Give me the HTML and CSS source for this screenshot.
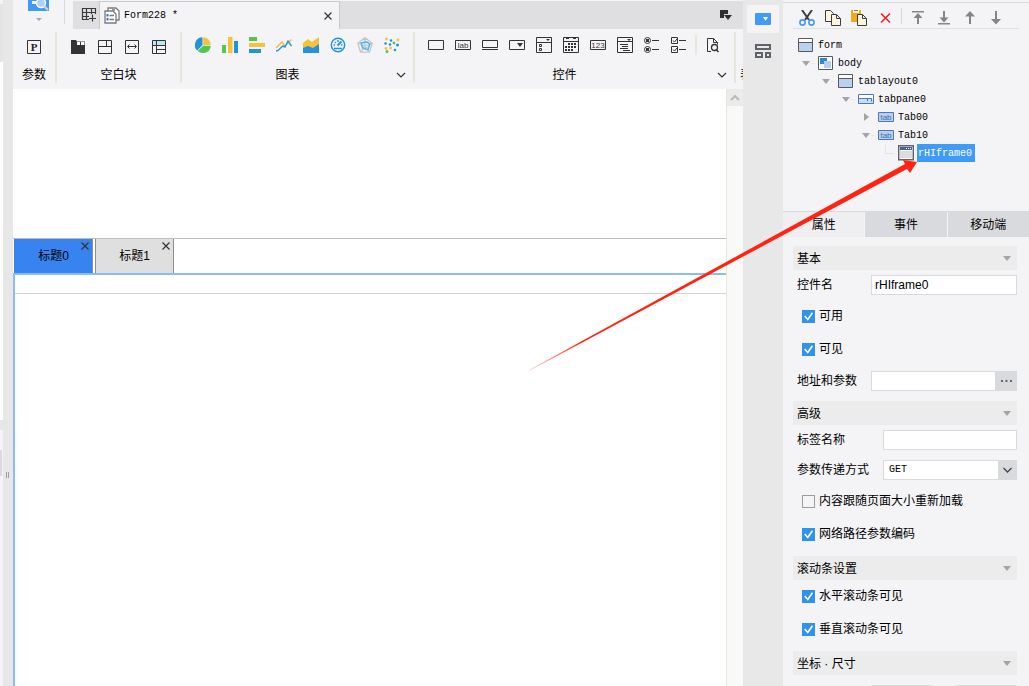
FILE: index.html
```html
<!DOCTYPE html>
<html lang="zh-CN">
<head>
<meta charset="utf-8">
<title>Form228</title>
<link rel="stylesheet" href="styles.css">
</head>
<body>
<div class="app">
  <aside class="edge">
    <div class="edge-card"></div>
    <div class="edge-list"></div>
    <div class="edge-gap"></div>
    <div class="edge-foot"><div class="edge-bar"></div></div>
  </aside>
  <div class="splitter"><span class="grip"></span></div>

  <main class="main">
    <header class="topbar">
      <div class="preview">
        <button class="btn" aria-label="预览">
          <svg width="22" height="22" viewBox="0 0 22 22"><path fill="#409bf8" d="M0 0h21v11H0z"/><path fill="#fff" d="M4 1h6v3H4z"/><circle cx="13" cy="3" r="4.5" fill="#a9d2fa" stroke="#fff" stroke-width="1.4"/><path d="M16 6l4 4" stroke="#d8d2c6" stroke-width="2.2"/><path fill="#a8a8a8" d="M8 18h6l-3 3z"/></svg>
        </button>
      </div>
      <div class="tabstrip">
        <button class="btn new-tab" aria-label="新建">
          <svg width="16" height="16" viewBox="0 0 16 16" fill="none" stroke="#3a3a3e" stroke-width="1.2"><path d="M14.500 7V1.500H1.500v11H8M1.500 5.500h13M1.500 9.500H8M5.500 1.500v11M10.500 1.500V7M11.500 7.500v7M8 11.500h7"/></svg>
        </button>
        <div class="file-tab">
          <svg width="16" height="17" viewBox="0 0 16 17" fill="none" stroke="#77797c" stroke-width="1.3"><path fill="#fff" d="M4 4V1h8l3 3v9h-3"/><path fill="#fff" d="M1 4h8l3 3v9H1z"/><path d="M5.500 8.500h4.500M5.500 12.500h4.500M8 3h3"/><path stroke="none" fill="#2874c4" d="M2.500 7h2v2.500h-2zM2.500 11h2v2.500h-2z"/></svg>
          <span class="file-name">Form228 *</span>
          <button class="btn" aria-label="关闭">
            <svg width="8" height="8" viewBox="0 0 8 8" stroke="#333" stroke-width="1.2"><path d="M.5.500l7 7M7.500.500l-7 7"/></svg>
          </button>
        </div>
        <button class="btn tab-menu" aria-label="窗口列表">
          <svg width="12" height="11" viewBox="0 0 12 11" fill="#2e2e30"><path d="M0 0h8v4H4v4H0zM4 5h8L8 10z"/></svg>
        </button>
      </div>
    </header>

    <nav class="toolbar">
      <section class="group">
        <div class="icons">
          <button class="btn" aria-label="参数"><svg width="16" height="18" viewBox="0 0 16 18"><path fill="none" stroke="#333" d="M1.500 3.500h13v13h-13z"/><text x="8" y="14" text-anchor="middle" class="glyph-p">P</text></svg></button>
        </div>
        <div class="label-row"><span class="label">参数</span></div>
      </section>
      <section class="group">
        <div class="icons">
          <button class="btn" aria-label="报表块"><svg width="16" height="18" viewBox="0 0 16 18"><path fill="#333" d="M1 3h5l1 1.500h8V17H1z"/><path fill="#fff" d="M7 5h3v3H7zM11 5h3.500v3H11z"/></svg></button>
          <button class="btn" aria-label="绝对画布块"><svg width="16" height="18" viewBox="0 0 16 18" fill="none" stroke="#333"><path d="M1.500 3.500h13v13h-13zM1.500 9.500h13M9.500 3.500v6"/></svg></button>
          <button class="btn" aria-label="自适应块"><svg width="16" height="18" viewBox="0 0 16 18" fill="none" stroke="#333"><path d="M1.500 3.500h13v13h-13zM4 9.500h8M5.500 7.500l-2 2 2 2M10.500 7.500l2 2-2 2"/></svg></button>
          <button class="btn" aria-label="Tab块"><svg width="16" height="18" viewBox="0 0 16 18" fill="none" stroke="#333"><path fill="#bfe6fb" stroke="none" d="M2 4h12v4H2z"/><path d="M1.500 3.500h13v13h-13zM1.500 8.500h13M5.500 3.500v13M5.500 12.500h9"/></svg></button>
        </div>
        <div class="label-row"><span class="label">空白块</span></div>
      </section>
      <section class="group">
        <div class="icons">
          <button class="btn" aria-label="饼图"><svg width="16" height="18" viewBox="0 0 16 18"><path fill="#2193dc" d="M7.500 8V.3A7.700 7.700 0 0 0 2.300 13.600z"/><path fill="#f8c137" d="M8.200 8V.3A7.700 7.700 0 0 1 15.700 8z"/><path fill="#4fc84c" d="M8 8.700h7.700A7.700 7.700 0 0 1 2.800 14z"/></svg></button>
          <button class="btn" aria-label="柱形图"><svg width="16" height="18" viewBox="0 0 16 18"><path fill="#52c750" d="M0 8h4v8H0z"/><path fill="#f8c137" d="M6 0h4.500v16H6z"/><path fill="#2193dc" d="M12 4h4v12h-4z"/></svg></button>
          <button class="btn" aria-label="条形图"><svg width="16" height="18" viewBox="0 0 16 18"><path fill="#52c750" d="M0 0h8v4H0z"/><path fill="#f8c137" d="M0 6h16v4H0z"/><path fill="#2193dc" d="M0 12h12v4H0z"/></svg></button>
          <button class="btn" aria-label="折线图"><svg width="16" height="18" viewBox="0 0 16 18" fill="none" stroke-width="1.400"><path stroke="#f8b837" d="M0 11l6-6 3 4 6.500-6.500"/><path stroke="#2193dc" d="M0 14c4 0 4-4 7-5l2 1 3-6 3.500 5"/></svg></button>
          <button class="btn" aria-label="面积图"><svg width="16" height="18" viewBox="0 0 16 18"><path fill="#2193dc" d="M0 9l5-2 4 3 7-5v11H0z"/><path fill="#f8c137" d="M0 6l5-4 4 3 7-5v7l-6 4-5-2-5 2z"/></svg></button>
          <button class="btn" aria-label="仪表盘"><svg width="16" height="18" viewBox="0 0 16 18" fill="none" stroke="#2193dc" stroke-width="1.400"><circle cx="8" cy="8" r="6.700"/><path d="M4 11.500h8M3.500 8h1.500M11 8h1.500M8 3v2M5 5l1 1"/><path d="M7.500 8.500l4-4" stroke-width="2"/></svg></button>
          <button class="btn" aria-label="雷达图"><svg width="16" height="18" viewBox="0 0 16 18" fill="none"><path stroke="#c3c5c8" stroke-width="1.300" d="M8 .7l7.200 5.500-2.700 9h-9L.8 6.200zM8 4l4 3-1.500 5h-5L4 7zM8 1v8L1 6M8 9l7-3M8 9l4 6M8 9l-4 6"/><path stroke="#4bb8f0" stroke-width="1.300" d="M4 6l6-1 3 2-2 6-5-2z"/></svg></button>
          <button class="btn" aria-label="散点图"><svg width="16" height="18" viewBox="0 0 16 18"><g fill="#2193dc"><circle cx="7" cy="3.500" r="1.300"/><circle cx="1.500" cy="6.500" r="1.300"/><circle cx="6" cy="7.500" r="1.300"/><circle cx="13.500" cy="8" r="1.500"/><circle cx="11" cy="13" r="1.300"/></g><g fill="#f5be45"><circle cx="2.500" cy="2" r="1.400"/><circle cx="14" cy="3" r="1.400"/><circle cx="2" cy="11.500" r="1.400"/><circle cx="6.500" cy="11" r="1.400"/></g><g fill="#52c750"><circle cx="10" cy="6" r="1.400"/><circle cx="3" cy="14.500" r="1.500"/></g></svg></button>
        </div>
        <div class="label-row"><span class="label">图表</span><button class="btn more" aria-label="更多图表"><svg width="16" height="8" viewBox="0 0 16 8" fill="none" stroke="#333" stroke-width="1.200"><path d="M4 2l4 4 4-4"/></svg></button></div>
      </section>
      <section class="group">
        <div class="icons">
          <button class="btn" aria-label="文本控件"><svg width="16" height="18" viewBox="0 0 16 18" fill="none" stroke="#333"><path d="M.5 3.500h15v9H.5z"/></svg></button>
          <button class="btn" aria-label="标签控件"><svg width="16" height="18" viewBox="0 0 16 18"><path fill="none" stroke="#333" d="M.5 3.500h15v9H.5z"/><text x="8" y="11" text-anchor="middle" class="glyph-s">lab</text></svg></button>
          <button class="btn" aria-label="按钮控件"><svg width="16" height="18" viewBox="0 0 16 18" fill="none" stroke="#333"><path d="M.5 3.500h15v7H.5zM0 12.500h16"/></svg></button>
          <button class="btn" aria-label="下拉框控件"><svg width="16" height="18" viewBox="0 0 16 18"><path fill="none" stroke="#333" d="M.5 3.500h15v9H.5z"/><path fill="#333" d="M8 6h6l-3 4z"/></svg></button>
          <button class="btn" aria-label="下拉复选框控件"><svg width="16" height="18" viewBox="0 0 16 18" fill="none" stroke="#333"><path d="M.5.500h15v15H.5zM.5 5.500h15M3.500 7.500h2v2h-2zM3.500 11.500h2v2h-2z"/><path stroke="none" fill="#333" d="M10 2h4l-2 2z"/></svg></button>
          <button class="btn" aria-label="日期控件"><svg width="16" height="18" viewBox="0 0 16 18" fill="none" stroke="#333"><path d="M.5.500h15v15H.5zM.5 4.500h15"/><path d="M3 1.500h3M10 1.500h3"/><path stroke-width="2" stroke-dasharray="2 1" d="M5 7h8M2 10h11M2 13h8"/></svg></button>
          <button class="btn" aria-label="数字控件"><svg width="16" height="18" viewBox="0 0 16 18"><path fill="none" stroke="#333" d="M.5 3.500h15v9H.5z"/><text x="8" y="11" text-anchor="middle" class="glyph-s">123</text></svg></button>
          <button class="btn" aria-label="下拉树控件"><svg width="16" height="18" viewBox="0 0 16 18" fill="none" stroke="#333"><path d="M.5.500h15v15H.5zM.5 4.500h15M3 7.500h8M5 9.500h6M3 11.500h8M6 13.500h7"/><path stroke="none" fill="#333" d="M10 2h4l-2 2z"/></svg></button>
          <button class="btn" aria-label="单选按钮组"><svg width="16" height="18" viewBox="0 0 16 18" fill="none" stroke="#333"><circle cx="3.500" cy="3.500" r="3"/><circle cx="3.500" cy="12.500" r="3"/><path d="M8 3.500h7M8 12.500h7"/><path stroke-width="3" d="M2 3.500h3M2 12.500h3"/></svg></button>
          <button class="btn" aria-label="复选按钮组"><svg width="16" height="18" viewBox="0 0 16 18" fill="none" stroke="#333"><path d="M.5.500h6v6h-6zM.5 9.500h6v6h-6zM2 3.500l1.500 1.500L6 2M2 12.500L3.500 14 6 11M8 3.500h7M8 12.500h7"/></svg></button>
          <span class="icon-sep"></span>
          <button class="btn" aria-label="查询"><svg width="16" height="18" viewBox="0 0 16 18" fill="none" stroke="#333"><path d="M6 14.500H2.500v-13h6l4 4v2M8.500 1.500v4h4"/><circle cx="9.500" cy="10.500" r="3" stroke-width="1.300"/><path stroke-width="1.500" d="M11 12.500l2.500 2.500"/></svg></button>
        </div>
        <div class="label-row"><span class="label">控件</span><button class="btn more" aria-label="更多控件"><svg width="16" height="8" viewBox="0 0 16 8" fill="none" stroke="#333" stroke-width="1.200"><path d="M4 2l4 4 4-4"/></svg></button></div>
      </section>
      <section class="group cut">
        <div class="label-row"><span class="label">表</span></div>
      </section>
    </nav>

    <div class="workspace">
      <div class="canvas">
        <div class="canvas-blank"></div>
        <div class="sheet-tabs">
          <div class="sheet-tab current"><span>标题0</span>
            <button class="btn sheet-close" aria-label="关闭标题0"><svg width="8" height="8" viewBox="0 0 8 8" stroke="#333" stroke-width="1.200"><path d="M.5.500l7 7M7.500.500l-7 7"/></svg></button></div>
          <div class="sheet-tab"><span>标题1</span>
            <button class="btn sheet-close" aria-label="关闭标题1"><svg width="8" height="8" viewBox="0 0 8 8" stroke="#333" stroke-width="1.200"><path d="M.5.500l7 7M7.500.500l-7 7"/></svg></button></div>
        </div>
        <div class="pane"><div class="pane-head"></div></div>
      </div>
      <div class="scroll">
        <button class="btn scroll-up" aria-label="向上滚动"><svg width="10" height="6" viewBox="0 0 10 6" fill="none" stroke="#b9b9b9" stroke-width="2"><path d="M1 5l4-4 4 4"/></svg></button>
      </div>
    </div>
  </main>

  <aside class="rail">
    <button class="btn rail-btn on" aria-label="控件设置"><svg width="16" height="12" viewBox="0 0 16 12"><rect width="16" height="12" rx="1" fill="#409bf8"/><path fill="#fff" d="M8 4h5l-2.500 4z"/></svg></button>
    <button class="btn rail-btn" aria-label="组件复用"><svg width="16" height="14" viewBox="0 0 16 14" fill="none" stroke="#5f626b" stroke-width="2"><path d="M1 1h14v4H1zM1 9h6v4H1zM11 9h4v4h-4z"/></svg></button>
  </aside>

  <aside class="panel">
    <div class="actions">
      <button class="btn" aria-label="剪切"><svg width="16" height="16" viewBox="0 0 16 16" fill="none"><path stroke="#3c3d40" stroke-width="2" d="M3 0l7 10M13 0L6 10"/><circle cx="3.500" cy="12.500" r="2.600" stroke="#409bf8" stroke-width="1.600"/><circle cx="12.500" cy="12.500" r="2.600" stroke="#409bf8" stroke-width="1.600"/></svg></button>
      <button class="btn" aria-label="复制"><svg width="16" height="16" viewBox="0 0 16 16" fill="#fff5dd" stroke="#3c3d40"><path d="M.5.500h5l3 3v8h-8z"/><path d="M6.500 4.500h5l4 4v7h-9zM11.500 4.500v4h4"/></svg></button>
      <button class="btn" aria-label="粘贴"><svg width="16" height="16" viewBox="0 0 16 16"><path fill="#f2a917" d="M0 0h10v12H0z"/><path fill="#fff" d="M2 0h6v3H2z"/><path fill="#b9781f" d="M3 0h4v1H3z"/><path fill="#fff5dd" stroke="#3c3d40" d="M6.500 4.500h5l4 4v7h-9zM11.500 4.500v4h4"/></svg></button>
      <button class="btn" aria-label="删除"><svg width="16" height="16" viewBox="0 0 16 16" stroke="#ee2222" stroke-width="1.600"><path d="M4 3.500l9 9M13 3.500l-9 9"/></svg></button>
      <span class="action-sep"></span>
      <button class="btn" aria-label="置于顶层"><svg width="16" height="16" viewBox="0 0 16 16" fill="#858585"><path d="M3 1h12v1.500H3zM9 3l4.500 5H10v6H8V8H4.500z"/></svg></button>
      <button class="btn" aria-label="置于底层"><svg width="16" height="16" viewBox="0 0 16 16" fill="#858585"><path d="M3 13h12v1.500H3zM9 12.500L4.500 7.500H8V1h2v6.500h3.500z"/></svg></button>
      <button class="btn" aria-label="上移"><svg width="16" height="16" viewBox="0 0 16 16" fill="#858585"><path d="M9 1l5 5.500h-4V14H8V6.500H4z"/></svg></button>
      <button class="btn" aria-label="下移"><svg width="16" height="16" viewBox="0 0 16 16" fill="#858585"><path d="M9 14.500L4 9h4V1h2v8h4z"/></svg></button>
    </div>

    <div class="tree" role="tree">
      <div class="node" role="treeitem"><svg width="16" height="16" viewBox="0 0 16 16"><path fill="#b9d1f3" stroke="#58595d" d="M.5 1.500h14v13H.5z"/><path fill="#fff" d="M1 2h13v3H1z"/><path stroke="#58595d" d="M1 5.500h13"/></svg><span class="name">form</span></div>
      <div class="kids">
        <div class="node" role="treeitem"><svg class="twist" width="16" height="16" viewBox="0 0 16 16"><path fill="#a4a4a4" d="M4 6h8l-4 5z"/><path stroke="#e4e4e6" d="M13 8.500h3"/></svg><svg width="16" height="16" viewBox="0 0 16 16"><path fill="#fff" stroke="#58595d" d="M.5 1.500h14v13H.5z"/><path fill="#2f8acb" d="M2 3h7v6H2z"/><path fill="#b3cdf4" d="M6 6h7v7H6z"/></svg><span class="name">body</span></div>
        <div class="kids">
          <div class="node" role="treeitem"><svg class="twist" width="16" height="16" viewBox="0 0 16 16"><path fill="#a4a4a4" d="M4 6h8l-4 5z"/><path stroke="#e4e4e6" d="M13 8.500h3"/></svg><svg width="16" height="16" viewBox="0 0 16 16"><path fill="#b9d1f3" stroke="#58595d" d="M.5 1.500h14v13H.5z"/><path fill="#fff" d="M1 2h13v3H1z"/><path stroke="#58595d" d="M1 5.500h13"/></svg><span class="name">tablayout0</span></div>
          <div class="kids">
            <div class="node" role="treeitem"><svg class="twist" width="16" height="16" viewBox="0 0 16 16"><path fill="#a4a4a4" d="M4 6h8l-4 5z"/><path stroke="#e4e4e6" d="M13 8.500h3"/></svg><svg width="16" height="16" viewBox="0 0 16 16"><path fill="#fff" stroke="#4d79bb" d="M.5 3.500h15v9H.5z"/><path fill="#c8dcf5" d="M1 8h14v4H1z"/><path fill="none" stroke="#4d79bb" d="M1 7.500h8M9.500 7v3M9.500 7.500h4v3"/></svg><span class="name">tabpane0</span></div>
            <div class="kids">
              <div class="node" role="treeitem"><svg class="twist" width="16" height="16" viewBox="0 0 16 16"><path fill="#a4a4a4" d="M6 4l5 4-5 4z"/></svg><svg width="16" height="16" viewBox="0 0 16 16"><path fill="#b6d0f0" stroke="#4d79bb" d="M.5 3.500h15v9H.5z"/><text x="8" y="11" text-anchor="middle" class="glyph-tab">tab</text></svg><span class="name">Tab00</span></div>
              <div class="node" role="treeitem"><svg class="twist" width="16" height="16" viewBox="0 0 16 16"><path fill="#a4a4a4" d="M4 6h8l-4 5z"/><path stroke="#e4e4e6" d="M13 8.500h3"/></svg><svg width="16" height="16" viewBox="0 0 16 16"><path fill="#b6d0f0" stroke="#4d79bb" d="M.5 3.500h15v9H.5z"/><text x="8" y="11" text-anchor="middle" class="glyph-tab">tab</text></svg><span class="name">Tab10</span></div>
              <div class="kids">
                <div class="node" role="treeitem" aria-selected="true"><svg class="twist" width="16" height="16" viewBox="0 0 16 16" fill="none"><path stroke="#e4e4e6" d="M7.500 0v8.500H16"/></svg><svg width="16" height="16" viewBox="0 0 16 16"><path fill="#f5f5f5" stroke="#62646b" stroke-width="1.400" d="M.7.700h14.600v14H.7z"/><path fill="#4960a8" d="M2 2h12v3H2z"/><path stroke="#fff" stroke-dasharray="1 1" d="M8 3.500h5"/><path fill="#dcdcdc" d="M2 6h12v7H2z"/></svg><span class="name selected">rHIframe0</span></div>
              </div>
            </div>
          </div>
        </div>
      </div>
    </div>

    <div class="prop-tabs" role="tablist">
      <button class="btn prop-tab active" role="tab" aria-selected="true">属性</button>
      <button class="btn prop-tab" role="tab">事件</button>
      <button class="btn prop-tab" role="tab">移动端</button>
    </div>

    <form class="props">
      <section class="sect">
        <h2 class="sect-head">基本<svg width="8" height="5" viewBox="0 0 8 5" fill="#a4a4a4"><path d="M0 0h8L4 5z"/></svg></h2>
        <div class="field"><label for="name">控件名</label><input class="box" id="name" type="text" value="rHIframe0"></div>
        <div class="checks">
          <label class="check"><input type="checkbox" checked>可用</label>
          <label class="check"><input type="checkbox" checked>可见</label>
        </div>
        <div class="field"><label for="url">地址和参数</label><input class="box" id="url" type="text"><button type="button" class="btn dots" aria-label="编辑地址"><svg width="11" height="2" viewBox="0 0 11 2" fill="#66676b"><path d="M0 0h2v2H0zM4.500 0h2v2h-2zM9 0h2v2H9z"/></svg></button></div>
      </section>
      <section class="sect wide">
        <h2 class="sect-head">高级<svg width="8" height="5" viewBox="0 0 8 5" fill="#a4a4a4"><path d="M0 0h8L4 5z"/></svg></h2>
        <div class="field"><label for="tag">标签名称</label><input class="box" id="tag" type="text"></div>
        <div class="field next"><label for="method">参数传递方式</label><span class="picker"><select class="box" id="method"><option>GET</option><option>POST</option></select><svg class="picker-arrow" width="19" height="18" viewBox="0 0 19 18"><path fill="#d9dadd" d="M0 0h19v18H0z"/><path fill="none" stroke="#444" stroke-width="1.300" d="M5.500 7l4 4 4-4"/></svg></span></div>
        <div class="checks">
          <label class="check"><input type="checkbox">内容跟随页面大小重新加载</label>
          <label class="check"><input type="checkbox" checked>网络路径参数编码</label>
        </div>
      </section>
      <section class="sect">
        <h2 class="sect-head">滚动条设置<svg width="8" height="5" viewBox="0 0 8 5" fill="#a4a4a4"><path d="M0 0h8L4 5z"/></svg></h2>
        <div class="checks tight">
          <label class="check"><input type="checkbox" checked>水平滚动条可见</label>
          <label class="check"><input type="checkbox" checked>垂直滚动条可见</label>
        </div>
      </section>
      <section class="sect">
        <h2 class="sect-head">坐标 · 尺寸<svg width="8" height="5" viewBox="0 0 8 5" fill="#a4a4a4"><path d="M0 0h8L4 5z"/></svg></h2>
        <div class="pair"><input class="box" type="text" aria-label="X"><input class="box" type="text" aria-label="Y"></div>
      </section>
    </form>
  </aside>

  <svg class="pointer" width="390" height="212" viewBox="0 0 390 212" aria-hidden="true">
    <defs><linearGradient id="fade" gradientUnits="userSpaceOnUse" x1="0" y1="211" x2="390" y2="2"><stop offset="0" stop-color="#ff2412" stop-opacity=".15"/><stop offset=".14" stop-color="#ff2412"/><stop offset="1" stop-color="#ff2412"/></linearGradient></defs>
    <path fill="url(#fade)" d="M1 210L377 4l-2-4 14 2-7 11-3-4L1 211z"/>
  </svg>
</div>
</body>
</html>
```
FILE: styles.css
```css
* { box-sizing: border-box; }
body {
  margin: 0;
  font: 12px/16px "Liberation Sans", "Noto Sans CJK SC", sans-serif;
  color: #000;
  background: #f4f4f7;
}
svg { display: block; flex: none; }
.btn {
  display: flex;
  align-items: center;
  justify-content: center;
  margin: 0;
  padding: 0;
  border: 0;
  background: none;
  color: inherit;
  font: inherit;
}
.app {
  position: relative;
  display: flex;
  height: 100vh;
  overflow: hidden;
}

/* left edge */
.edge { display: flex; flex-direction: column; width: 3px; padding-top: 4px; background: #f4f4f7; }
.edge-card { height: 58px; background: #e4e4e4; border-radius: 0 0 2px 0; }
.edge-list { height: 358px; background: #fff; }
.edge-gap { height: 10px; background: #e7e7e7; }
.edge-foot { padding-top: 20px; }
.edge-bar { width: 2px; height: 26px; background: #d9d9df; }
.splitter { width: 10px; padding: 472px 0 0 3px; background: #e7e7e7; }
.grip { display: block; width: 3px; height: 6px; border: solid #a0a0a0; border-width: 0 1px; }

/* top bar */
.main { display: flex; flex-direction: column; flex: 1; min-width: 0; }
.topbar { display: flex; height: 29px; }
.preview { display: flex; justify-content: space-between; width: 60px; padding-left: 15px; }
.preview::after { content: ""; width: 1px; height: 24px; margin-right: 8px; background: #d9d9dd; }
.preview .btn { align-items: flex-start; }
.tabstrip { display: flex; flex: 1; margin-top: 1px; background: #dfdfe1; }
.new-tab { width: 26px; padding-left: 6px; }
.file-tab {
  display: flex;
  align-items: center;
  width: 241px;
  padding: 0 7px 0 4px;
  background: #f4f4f7;
  border: solid #c9c9cc;
  border-width: 1px 1px 0;
}
.file-name { flex: 1; padding-left: 4px; font: 10px/16px "Liberation Mono", monospace; }
.tab-menu { margin: 0 11px 0 auto; }

/* toolbar */
.toolbar { display: flex; padding: 3px 0 6px; overflow: hidden; }
.group {
  display: flex;
  flex: none;
  flex-direction: column;
  justify-content: space-between;
  height: 51px;
  padding-top: 5px;
  border-right: 2px solid #e8e6dc;
}
.icons { display: flex; gap: 11px; padding: 0 13px; }
.icon-sep { width: 2px; height: 20px; margin: -2px -3px 0; background: #e8e6dc; }
.label-row { display: flex; }
.label { flex: 1; text-align: center; }
.more { margin-right: 4px; }
.cut { justify-content: flex-end; padding-left: 4px; border: 0; }
.glyph-p { font: bold 11px "Liberation Serif", serif; fill: #222; }
.glyph-s { font: 8px "Liberation Sans", sans-serif; fill: #333; }
.glyph-tab { font: 8px "Liberation Sans", sans-serif; fill: #3e6fae; }

/* design canvas */
.workspace { display: flex; flex: 1; background: #fff; }
.canvas { display: flex; flex: 1; flex-direction: column; }
.canvas-blank { height: 150px; border-bottom: 1px solid #bdbdbd; }
.sheet-tabs { display: flex; gap: 2px; height: 34px; padding-left: 1px; }
.sheet-tab {
  position: relative;
  display: flex;
  align-items: center;
  justify-content: center;
  width: 79px;
  background: #dfdfdf;
  border: solid #8e8e8e;
  border-width: 0 1px;
}
.current { background: #3784f0; border-left-color: #3784f0; }
.sheet-close { position: absolute; top: 3px; right: 3px; }
.pane { flex: 1; border: solid #89bdf8; border-width: 2px 0 0 2px; }
.pane-head { height: 19px; border-bottom: 1px solid #d4d4d6; }
.scroll { width: 17px; background: #f9f9f7; border-left: 1px solid #e8e6dc; }
.scroll-up { width: 16px; height: 17px; background: #ebebe9; }

/* icon rail */
.rail { width: 40px; padding: 5px 4px; background: #e8e8e8; }
.rail-btn { width: 32px; height: 28px; margin-bottom: 4px; }
.on { background: #f4f4f7; }

/* right panel */
.panel { width: 246px; padding-top: 2px; }
.panel::before { content: ""; display: block; height: 1px; background: #dadade; }
.actions {
  display: flex;
  gap: 10px;
  height: 26px;
  margin: 0 10px;
  padding: 5px 6px 0;
  border-bottom: 1px solid #e0e0e3;
}
.action-sep { width: 1px; height: 16px; margin: 0 -3px 0 -2px; background: #d4d4d8; }
.tree { min-height: 182px; padding: 7px 0 0 15px; }
.kids { padding-left: 20px; }
.node { display: flex; align-items: center; height: 18px; }
.twist { margin: 0 4px 0 -20px; }
.name { margin-left: 3px; padding: 1px 1px 0; font: 10px/17px "Liberation Mono", monospace; }
.selected { padding: 1px 3px 0 1px; background: #409bf8; color: #fff; }
.prop-tabs { display: flex; gap: 1px; height: 26px; border-top: 1px solid #d9dadd; }
.prop-tab { flex: 1; background: #d9dadd; }
.active { background: #efeff1; }

.props { padding: 9px 12px 0 10px; }
.sect { margin-bottom: 10px; }
.sect-head {
  display: flex;
  align-items: center;
  justify-content: space-between;
  height: 24px;
  margin: 0 0 5px;
  padding: 1px 6px 0 4px;
  background: #ececec;
  font-size: 12px;
  font-weight: normal;
}
.field { display: flex; align-items: center; height: 20px; }
.next { margin-top: 10px; }
.field label { width: 78px; padding-left: 4px; }
.wide .field label { width: 90px; }
.box {
  flex: 1;
  min-width: 0;
  width: 100%;
  height: 20px;
  padding: 0 3px;
  border: 1px solid #d9dadd;
  border-radius: 0;
  background: #fff;
  color: #000;
  font: 12px/16px "Liberation Sans", sans-serif;
}
.dots { width: 21px; height: 20px; background: #d9dadd; }
.picker { position: relative; display: flex; flex: 1; }
.picker .box { padding: 0 5px; appearance: none; font: 10px/18px "Liberation Mono", monospace; }
.picker-arrow { position: absolute; top: 1px; right: 0; pointer-events: none; }
.checks { display: grid; gap: 20px; margin: 15px 0; padding-left: 9px; }
.tight { margin-top: 10px; }
.check { display: flex; align-items: center; gap: 4px; height: 13px; line-height: 13px; }
.check input {
  width: 13px;
  height: 13px;
  margin: 0;
  appearance: none;
  border: 1px solid #9c9c9c;
  background: #f4f4f7;
}
.check input:checked { border-color: #2f92ee; background: #2f92ee; }
.check input:checked::after {
  content: "";
  display: block;
  height: 11px;
  background: #fff;
  clip-path: polygon(10% 50%, 22% 42%, 42% 66%, 80% 12%, 92% 20%, 44% 88%);
}
.pair { display: grid; grid-template-columns: 61px 61px; justify-content: end; gap: 24px; padding-top: 5px; }

.pointer { position: absolute; top: 160px; right: 111px; pointer-events: none; }
```
